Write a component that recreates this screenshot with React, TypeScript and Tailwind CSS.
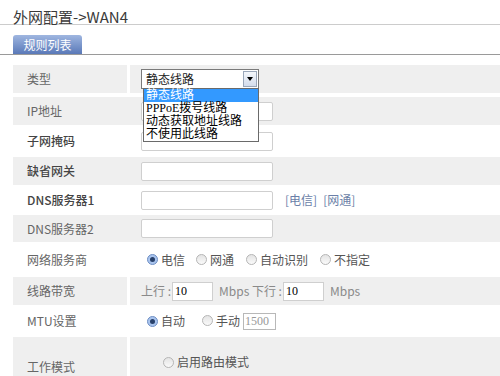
import React from 'react';

const font = { fontFamily: '"Noto Sans CJK SC", "Noto Sans", sans-serif' };
const serif = { fontFamily: '"Liberation Serif", "Noto Sans CJK SC", serif' };

function Radio({ checked }: { checked?: boolean }) {
  return checked ? (
    <span className="inline-flex h-[11px] w-[11px] items-center justify-center rounded-full border border-[#6f8fc4] bg-[#a9c4ee]">
      <span className="h-[5px] w-[5px] rounded-full bg-[#27406a]" />
    </span>
  ) : (
    <span className="inline-block h-[11px] w-[11px] rounded-full border border-[#b5b5b5] bg-gradient-to-b from-[#e4e4e4] to-[#fafafa]" />
  );
}

function TextBox({ className = '' }: { className?: string }) {
  return <div className={`h-[19px] w-[132px] rounded-[2px] border border-[#cfcfcf] bg-white ${className}`} />;
}

function Row({
  label,
  gray,
  split,
  bold,
  h,
  children,
  labelClass = 'items-center',
}: {
  label: string;
  gray?: boolean;
  split?: boolean;
  bold?: boolean;
  h: string;
  children?: React.ReactNode;
  labelClass?: string;
}) {
  const bg = gray ? 'bg-[#efefef]' : 'bg-white';
  return (
    <div className={`flex ${h}`}>
      <div className={`flex w-[114px] pl-[14px] ${bg} ${labelClass}`}>
        <span className={`text-[12px] leading-[14px] ${bold ? 'font-medium text-[#444]' : 'text-[#666]'}`}>{label}</span>
      </div>
      <div className={`w-[3px] ${split ? 'bg-white' : bg}`} />
      <div className={`flex flex-1 items-center pl-[11px] ${bg}`}>{children}</div>
    </div>
  );
}

export default function App() {
  return (
    <div className="h-[376px] w-[500px] overflow-hidden bg-white" style={font}>
      <div className="h-[25px] border-b border-[#cccccc] pl-[13px] pt-[4px]">
        <span className="text-[15px] leading-[18px] text-[#3a3a3a]">外网配置-&gt;WAN4</span>
      </div>
      <div className="mt-[10px] flex h-[20px] items-end border-b border-[#9a9a9a] pl-[13px]">
        <div className="flex h-[19px] w-[69px] items-center justify-center rounded-t-[3px] bg-gradient-to-b from-[#9fb6e0] to-[#5a79b8] text-[12px] text-white">
          规则列表
        </div>
      </div>

      <div className="ml-[13px] mt-[10px]">
        <Row label="类型" gray split h="h-[28px]">
          <div className="relative">
            <div className="flex h-[20px] w-[118px] items-center justify-between border border-[#7a7a7a] bg-white pl-[4px]">
              <span className="text-[12px] text-[#222]">静态线路</span>
              <span className="mr-px flex h-[16px] w-[14px] items-center justify-center border border-[#9aa7ba] bg-gradient-to-b from-[#f4f7fb] to-[#d4dceb]">
                <span className="h-0 w-0 border-x-[3px] border-t-[4px] border-x-transparent border-t-black" />
              </span>
            </div>
            <div className="absolute left-[2px] top-[19px] z-10 w-[116px] border border-[#6a6a6a] bg-white text-[12px] leading-[13px] text-black" style={serif}>
              <div className="bg-[#3399ff] px-[2px] text-white">静态线路</div>
              <div className="px-[2px]">PPPoE拨号线路</div>
              <div className="px-[2px]">动态获取地址线路</div>
              <div className="px-[2px]">不使用此线路</div>
            </div>
          </div>
        </Row>
        <div className="h-[4px]" />
        <Row label="IP地址" gray h="h-[28px]">
          <TextBox />
        </Row>
        <Row label="子网掩码" bold h="h-[32px]">
          <TextBox />
        </Row>
        <Row label="缺省网关" gray bold h="h-[28px]">
          <TextBox />
        </Row>
        <Row label="DNS服务器1" bold h="h-[30px]">
          <TextBox />
          <span className="ml-[12px] text-[12px] text-[#6b7fa8]">[电信]</span>
          <span className="ml-[6px] text-[12px] text-[#6b7fa8]">[网通]</span>
        </Row>
        <Row label="DNS服务器2" gray h="h-[27px]">
          <TextBox />
        </Row>
        <Row label="网络服务商" h="h-[35px]">
          <div className="flex items-center gap-[3px] pl-[6px] text-[12px] text-[#555]">
            <Radio checked />
            <span>电信</span>
            <span className="ml-[8px]"><Radio /></span>
            <span>网通</span>
            <span className="ml-[9px]"><Radio /></span>
            <span>自动识别</span>
            <span className="ml-[9px]"><Radio /></span>
            <span>不指定</span>
          </div>
        </Row>
        <Row label="线路带宽" gray split h="h-[28px]">
          <div className="flex items-center text-[12px] text-[#8a8a8a]">
            <span>上行 :</span>
            <div className="ml-px flex h-[19px] w-[41px] items-center border border-[#cfcfcf] bg-white pl-[2px] text-[12px] text-black" style={serif}>10</div>
            <span className="ml-[6px]">Mbps 下行 :</span>
            <div className="ml-px flex h-[19px] w-[41px] items-center border border-[#cfcfcf] bg-white pl-[2px] text-[12px] text-black" style={serif}>10</div>
            <span className="ml-[6px]">Mbps</span>
          </div>
        </Row>
        <Row label="MTU设置" h="h-[32px]">
          <div className="flex items-center gap-[3px] pl-[6px] text-[12px] text-[#555]">
            <Radio checked />
            <span>自动</span>
            <span className="ml-[14px]"><Radio /></span>
            <span>手动</span>
            <div className="flex h-[17px] w-[33px] items-center border border-[#b8b8b8] bg-white pl-px text-[12px] text-[#999]" style={serif}>1500</div>
          </div>
        </Row>
        <Row label="工作模式" gray split h="h-[60px]" labelClass="items-start pt-[23px]">
          <div className="flex items-center gap-[3px] self-start pl-[22px] pt-[16px] text-[12px] text-[#555]">
            <Radio />
            <span>启用路由模式</span>
          </div>
        </Row>
      </div>
    </div>
  );
}
